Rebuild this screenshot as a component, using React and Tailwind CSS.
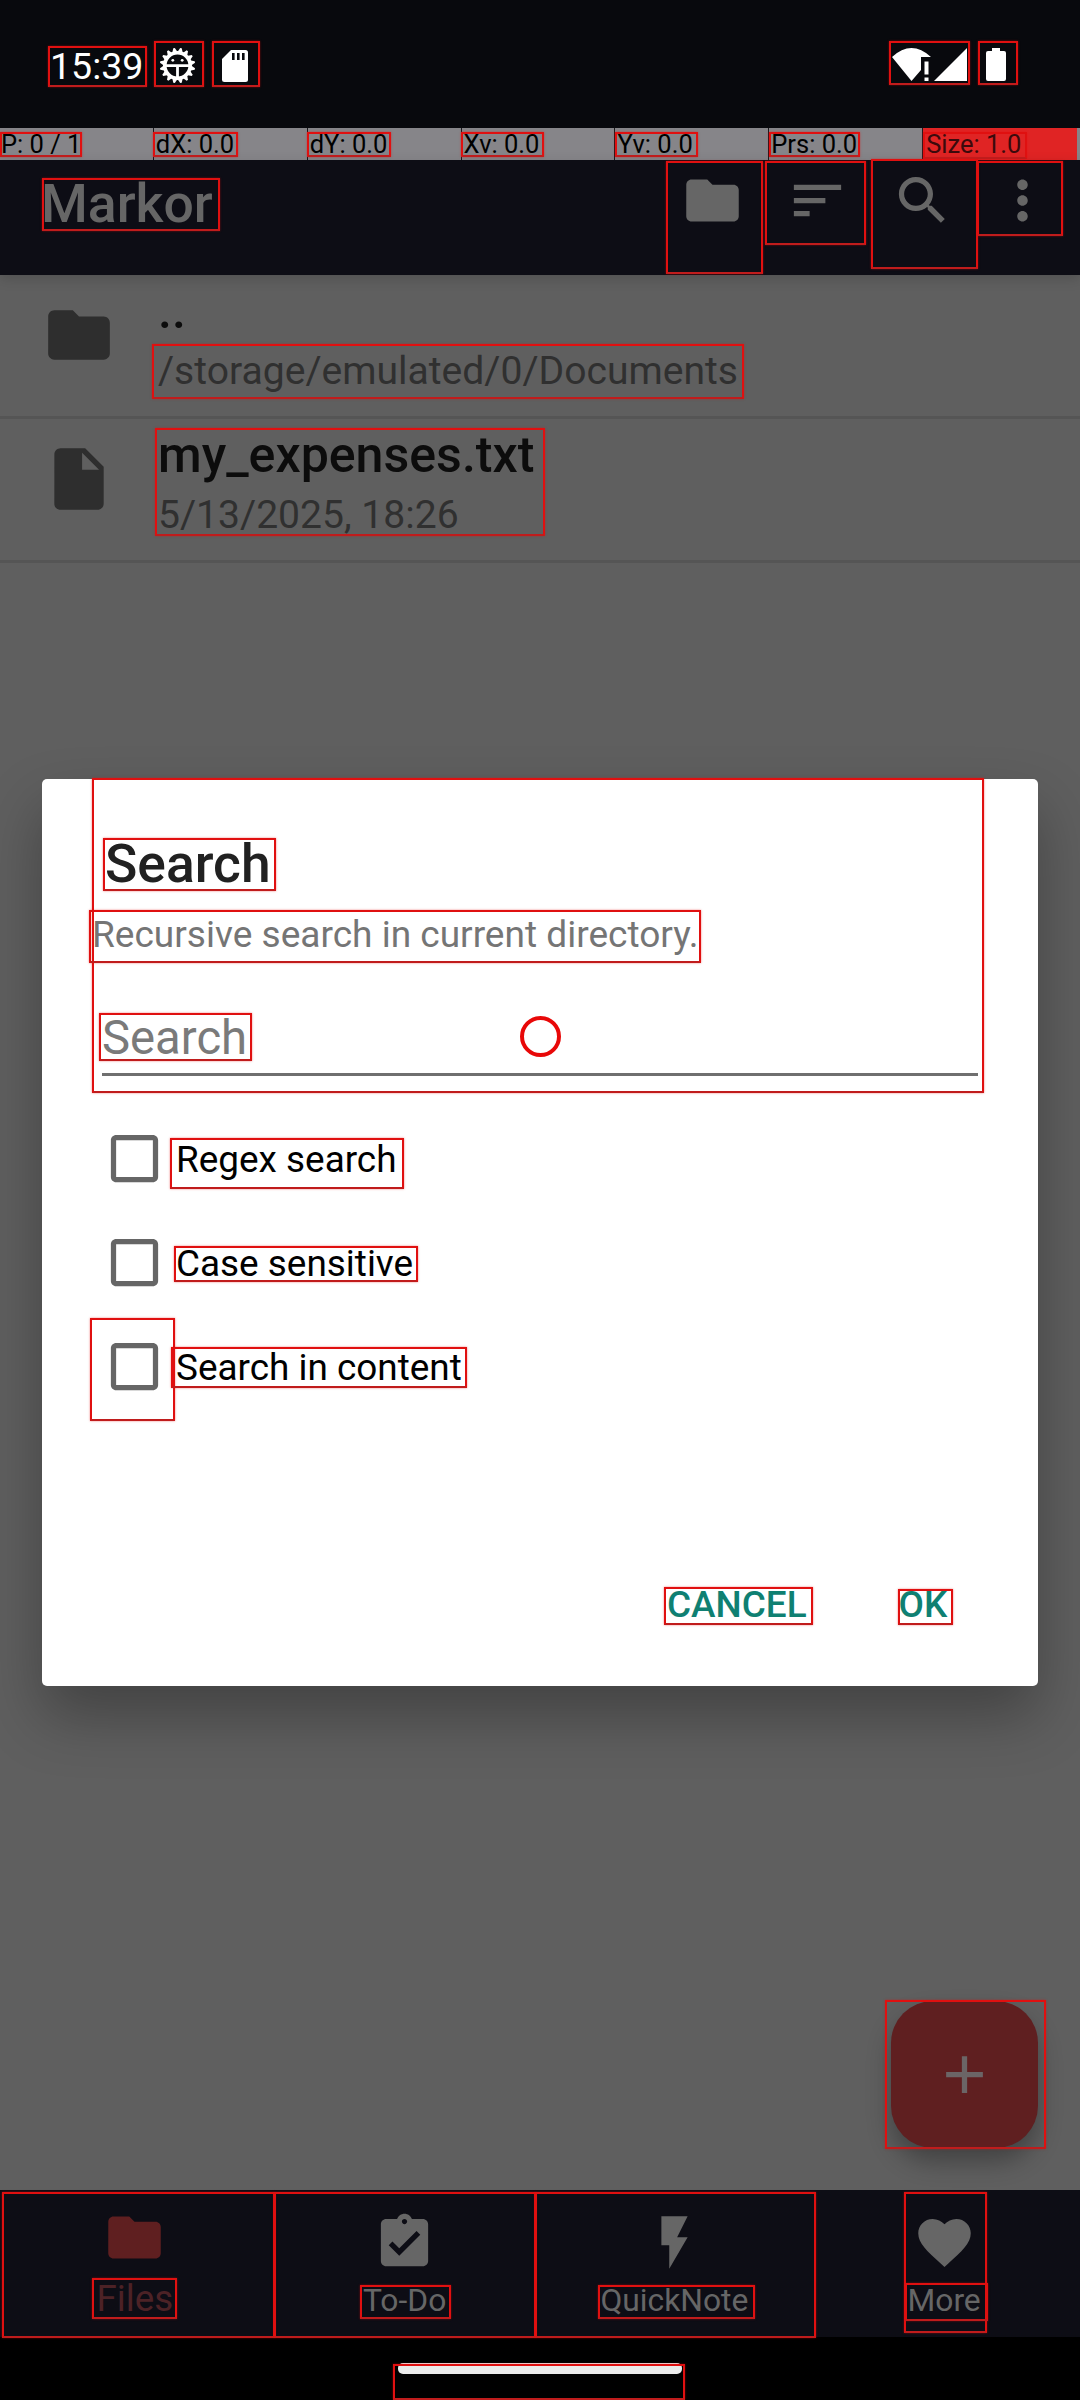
import React from 'react';

const PATHS = {
  folder: 'M10 4H4c-1.1 0-1.99.9-1.99 2L2 18c0 1.1.9 2 2 2h16c1.1 0 2-.9 2-2V8c0-1.1-.9-2-2-2h-8l-2-2z',
  file: 'M6 2c-1.1 0-1.99.9-1.99 2L4 20c0 1.1.89 2 1.99 2H18c1.1 0 2-.9 2-2V8l-6-6H6zm7 7V3.5L18.5 9H13z',
  sort: 'M3 18h6v-2H3v2zM3 6v2h18V6H3zm0 7h12v-2H3v2z',
  search:
    'M15.5 14h-.79l-.28-.27C15.41 12.59 16 11.11 16 9.5 16 5.91 13.09 3 9.5 3S3 5.91 3 9.5 5.91 16 9.5 16c1.61 0 3.09-.59 4.23-1.57l.27.28v.79l5 4.99L20.49 19l-4.99-5zm-6 0C7.01 14 5 11.99 5 9.5S7.01 5 9.5 5 14 7.01 14 9.5 11.99 14 9.5 14z',
  more: 'M12 8c1.1 0 2-.9 2-2s-.9-2-2-2-2 .9-2 2 .9 2 2 2zm0 2c-1.1 0-2 .9-2 2s.9 2 2 2 2-.9 2-2-.9-2-2-2zm0 6c-1.1 0-2 .9-2 2s.9 2 2 2 2-.9 2-2-.9-2-2-2z',
  todo: 'M19 3h-4.18C14.4 1.84 13.3 1 12 1c-1.3 0-2.4.84-2.82 2H5c-1.1 0-2 .9-2 2v14c0 1.1.9 2 2 2h14c1.1 0 2-.9 2-2V5c0-1.1-.9-2-2-2zm-7 0c.55 0 1 .45 1 1s-.45 1-1 1-1-.45-1-1 .45-1 1-1zm-2 14l-4-4 1.41-1.41L10 14.17l6.59-6.59L18 9l-8 8z',
  bolt: 'M7 2v11h3v9l7-12h-4l4-8z',
  heart:
    'M12 21.35l-1.45-1.32C5.4 15.36 2 12.28 2 8.5 2 5.42 4.42 3 7.5 3c1.74 0 3.41.81 4.5 2.09C13.09 3.81 14.76 3 16.5 3 19.58 3 22 5.42 22 8.5c0 3.78-3.4 6.86-8.55 11.54L12 21.35z',
  plus: 'M19 13h-6v6h-2v-6H5v-2h6V5h2v6h6v2z',
  checkbox: 'M19 5v14H5V5h14m0-2H5c-1.1 0-2 .9-2 2v14c0 1.1.9 2 2 2h14c1.1 0 2-.9 2-2V5c0-1.1-.9-2-2-2z',
};

function Icon({ name, className }) {
  return (
    <svg viewBox="0 0 24 24" fill="currentColor" fillRule="evenodd" className={className}>
      <path d={PATHS[name]} />
    </svg>
  );
}

const TEETH = Array.from({ length: 16 }, (_, i) => i * 22.5 + 11.25);

function DebugIcon() {
  return (
    <svg viewBox="0 0 37 37" className="size-[37px] shrink-0">
      {TEETH.map((a) => (
        <path key={a} d="M15.7 5.500 L17.700 0.800 H19.300 L21.300 5.500Z" fill="#fff" transform={`rotate(${a} 18.5 18.5)`} />
      ))}
      <circle cx="18.5" cy="18.5" r="12.7" fill="none" stroke="#fff" strokeWidth="3.6" />
      <path d="M5 18.7H32M18.5 19V32" stroke="#fff" strokeWidth="2.8" />
      <circle cx="13.8" cy="13.3" r="1.4" fill="#fff" />
      <circle cx="23.2" cy="13.3" r="1.4" fill="#fff" />
    </svg>
  );
}

function StatusBar() {
  return (
    <div className="flex h-[128px] items-center bg-[#08090d] pt-[3px] pl-[50px] pr-[74px] text-white">
      <span className="mt-px w-[109px] text-[37.5px] leading-[44px]">15:39</span>
      <DebugIcon />
      <svg viewBox="0 0 26 32" className="ml-[26px] h-8 w-[26px]">
        <path d="M9 0H23.5Q26 0 26 2.5V29.500Q26 32 23.500 32H2.500Q0 32 0 29.500V9Z" fill="#fff" />
        <path d="M10 3h2.600v7H10zM15 3h2.600v7H15zM20 3h2.600v7H20z" fill="#08090d" />
      </svg>
      <svg viewBox="0 0 39 33" className="-mt-[3px] ml-auto h-[33px] w-[39px]">
        <path d="M0 9Q19.500 -9 39 9H29V22L19.500 33Z" fill="#fff" />
        <path d="M32.500 13.500h4v13h-4zM32.500 29.500h4v3.500h-4z" fill="#fff" />
      </svg>
      <svg viewBox="0 0 33 33" className="-mt-[3px] ml-[3px] size-[33px]">
        <path d="M33 0V33H0Z" fill="#fff" />
      </svg>
      <svg viewBox="0 0 20 33" className="-mt-[3px] ml-[19px] h-[33px] w-5">
        <path d="M6 0H14V3H18Q20 3 20 5V31Q20 33 18 33H2Q0 33 0 31V5Q0 3 2 3H6Z" fill="#fff" />
      </svg>
    </div>
  );
}

const READOUTS = ['P: 0 / 1', 'dX: 0.0', 'dY: 0.0', 'Xv: 0.0', 'Yv: 0.0', 'Prs: 0.0'];

function PointerBar() {
  return (
    <div className="flex h-8 bg-[#868589]">
      <div className="grid w-[1077px] grid-cols-7 text-[25.5px] leading-8">
        {READOUTS.map((r) => (
          <div key={r} className="border-r border-[#1a1a1e] pl-[2px] text-black first:pl-px">
            {r}
          </div>
        ))}
        <div className="bg-[#e02424] pl-[3px] text-[#3c0a0c]">Size: 1.0</div>
      </div>
    </div>
  );
}

function Toolbar() {
  return (
    <div className="relative flex h-[115px] items-center bg-[#0d0d15] pb-[34px] pl-[41px] pr-[26px] text-[#666] shadow-[0_4px_12px_rgba(0,0,0,0.15)]">
      <h1 className="mt-[7px] text-[53.5px] font-medium leading-[60px]">Markor</h1>
      <Icon name="folder" className="ml-auto size-[63px]" />
      <Icon name="sort" className="ml-[42px] size-[63px]" />
      <Icon name="search" className="ml-[42px] size-[63px]" />
      <Icon name="more" className="ml-[37px] size-[63px]" />
    </div>
  );
}

function FileRow({ icon, title, detail }) {
  return (
    <div className="flex h-[144px] items-start border-b-[3px] border-[#555] pl-[42px]">
      <Icon name={icon} className="mt-[23px] size-[74px] text-[#2e2e2e]" />
      <div className="ml-[42px] mt-[6px]">
        <div className="text-[50.1px] font-medium leading-[60px] text-[#0c0c0c]">{title}</div>
        <div className="mt-[2px] text-[39.1px] leading-[56px] text-[#303030]">{detail}</div>
      </div>
    </div>
  );
}

const TABS = [
  { icon: 'folder', label: 'Files', active: true },
  { icon: 'todo', label: 'To-Do' },
  { icon: 'bolt', label: 'QuickNote' },
  { icon: 'heart', label: 'More' },
];

function BottomNav() {
  return (
    <div className="grid h-[147px] grid-cols-4 bg-[#0d0d15] pr-px text-[#666]">
      {TABS.map((t) => (
        <div key={t.label} className="flex flex-col items-center">
          <Icon
            name={t.icon}
            className={t.active ? 'mt-4 size-[63px] text-[#5f1f20]' : 'mt-[21px] size-[63px]'}
          />
          <span
            className={
              t.active
                ? 'mt-2 text-[36.75px] leading-[44px] text-[#4c2226]'
                : 'mt-[6px] text-[31.8px] leading-[40px]'
            }
          >
            {t.label}
          </span>
        </div>
      ))}
    </div>
  );
}

const OPTIONS = ['Regex search', 'Case sensitive', 'Search in content'];

function SearchDialog() {
  return (
    <div className="absolute left-[42px] top-[779px] flex h-[907px] w-[996px] flex-col rounded-[5px] bg-white shadow-[0_30px_60px_rgba(0,0,0,0.3)]">
      <h2 className="ml-[63px] mt-[55px] text-[53.4px] font-medium leading-[60px] text-[#212121]">Search</h2>
      <p className="ml-[50px] mt-[19px] text-[37.05px] leading-[44px] text-[#757575]">
        Recursive search in current directory.
      </p>
      <div className="ml-[60px] mt-[49px] h-[70px] w-[876px] border-b-[3px] border-[#6f6f6f] pt-[2px] text-[47.25px] leading-[60px] text-[#7a7a7a]">
        Search
      </div>
      <div className="ml-[60px] mt-[30px] flex flex-col">
        {OPTIONS.map((o) => (
          <label key={o} className="flex h-[104px] items-center text-[36.9px] leading-[44px] text-black">
            <Icon name="checkbox" className="ml-px size-[63px] text-[#666]" />
            <span className="ml-[10px] mt-[4px]">{o}</span>
          </label>
        ))}
      </div>
      <div className="mb-[59px] ml-[625px] mt-auto flex gap-[92px] text-[36.9px] font-medium leading-[44px] text-[#0f8072]">
        <span>CANCEL</span>
        <span>OK</span>
      </div>
    </div>
  );
}

// Bounds of every detected element: x, y, width, height.
const BOUNDS = [
  [48, 46, 99, 41], [154, 41, 50, 46], [212, 41, 48, 46], [889, 41, 81, 44], [978, 41, 40, 44],
  [0, 132, 82, 25], [153, 132, 85, 25], [307, 132, 84, 25], [461, 132, 83, 25], [615, 132, 83, 25],
  [769, 132, 91, 25], [923, 132, 104, 27],
  [42, 178, 178, 53], [666, 161, 97, 113], [765, 161, 101, 84], [871, 159, 107, 110], [977, 161, 86, 75],
  [152, 344, 592, 55], [155, 428, 390, 108],
  [92, 778, 892, 315], [103, 838, 173, 53], [89, 910, 612, 53], [99, 1013, 153, 48],
  [170, 1138, 234, 51], [174, 1246, 244, 36], [90, 1318, 85, 103], [171, 1347, 296, 41],
  [664, 1587, 149, 38], [898, 1589, 55, 36],
  [885, 2000, 161, 149],
  [2, 2192, 273, 146], [274, 2192, 262, 146], [535, 2192, 281, 146], [904, 2192, 83, 141],
  [92, 2278, 85, 41], [360, 2285, 91, 34], [598, 2285, 157, 34], [905, 2283, 83, 38],
  [393, 2364, 292, 36],
];

function Bounds() {
  return (
    <div className="pointer-events-none absolute inset-0">
      {BOUNDS.map(([left, top, width, height]) => (
        <div
          key={`${left}-${top}`}
          className="absolute border-2 border-[#e01010] border-b-[#c01c1c] shadow-[0_0_2px_rgba(230,10,10,0.5)]"
          style={{ left, top, width, height }}
        />
      ))}
      <div className="absolute left-[520px] top-[1016px] size-[41px] rounded-full border-4 border-[#e80808]" />
    </div>
  );
}

export default function App() {
  return (
    <div className="relative flex h-[2400px] w-[1080px] flex-col overflow-hidden bg-black font-['Roboto',sans-serif]">
      <StatusBar />
      <PointerBar />
      <Toolbar />
      <div className="flex-1 bg-[#5f5f5f]">
        <FileRow icon="folder" title=".." detail="/storage/emulated/0/Documents" />
        <FileRow icon="file" title="my_expenses.txt" detail="5/13/2025, 18:26" />
      </div>
      <div className="absolute left-[891px] top-[2001px] flex size-[147px] items-center justify-center rounded-[42px] bg-[#5f1f20] shadow-[0_14px_24px_rgba(0,0,0,0.3)]">
        <Icon name="plus" className="size-[63px] text-[#6b6566]" />
      </div>
      <BottomNav />
      <div className="flex h-[63px] justify-center bg-black pt-[26px]">
        <div className="h-[11px] w-[284px] rounded-[5px] bg-[#ececec]" />
      </div>
      <SearchDialog />
      <Bounds />
    </div>
  );
}
